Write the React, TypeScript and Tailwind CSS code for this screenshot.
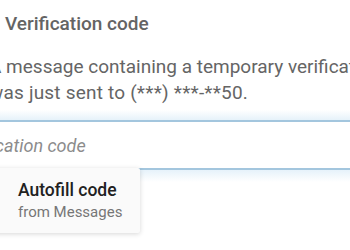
import React from "react";

export default function App() {
  return (
    <div
      className="relative w-[350px] h-[250px] overflow-hidden bg-white"
      style={{ fontFamily: "Roboto, 'Noto Sans', sans-serif" }}
    >
      <div className="pl-[5px] pt-[10px] text-[19px] leading-[28px] font-medium text-[#646464] whitespace-nowrap">
        Verification code
      </div>
      <div className="mt-[16px] -ml-[11px] text-[19px] leading-[26px] text-[#656565] whitespace-nowrap">
        <div>A message containing a temporary verification code</div>
        <div className="tracking-[0.2px]">was just sent to (***) ***-**50.</div>
      </div>
      <div className="relative mt-[4px]">
        <div className="h-[10px] bg-gradient-to-b from-white to-[#e6f2fa]" />
        <div className="h-[2px] bg-[#a3c6de]" />
        <div className="h-[46px] -ml-[45px] flex items-center text-[18px] italic text-[#8c8c8c] whitespace-nowrap">
          Verification code
        </div>
        <div className="h-[2px] bg-[#a3c6de]" />
        <div className="h-[12px] bg-gradient-to-b from-[#e6f2fa] to-white" />
        <div className="absolute left-[-10px] top-[58px] w-[150px] h-[65px] bg-[#fafafa] rounded-[2px] shadow-[0_1px_5px_rgba(0,0,0,0.16)] pl-[28px] pt-[11px]">
          <div className="text-[17.5px] leading-[22px] font-medium text-[#212121]">Autofill code</div>
          <div className="text-[15px] leading-[20px] text-[#767676] mt-[1px]">from Messages</div>
        </div>
      </div>
    </div>
  );
}
